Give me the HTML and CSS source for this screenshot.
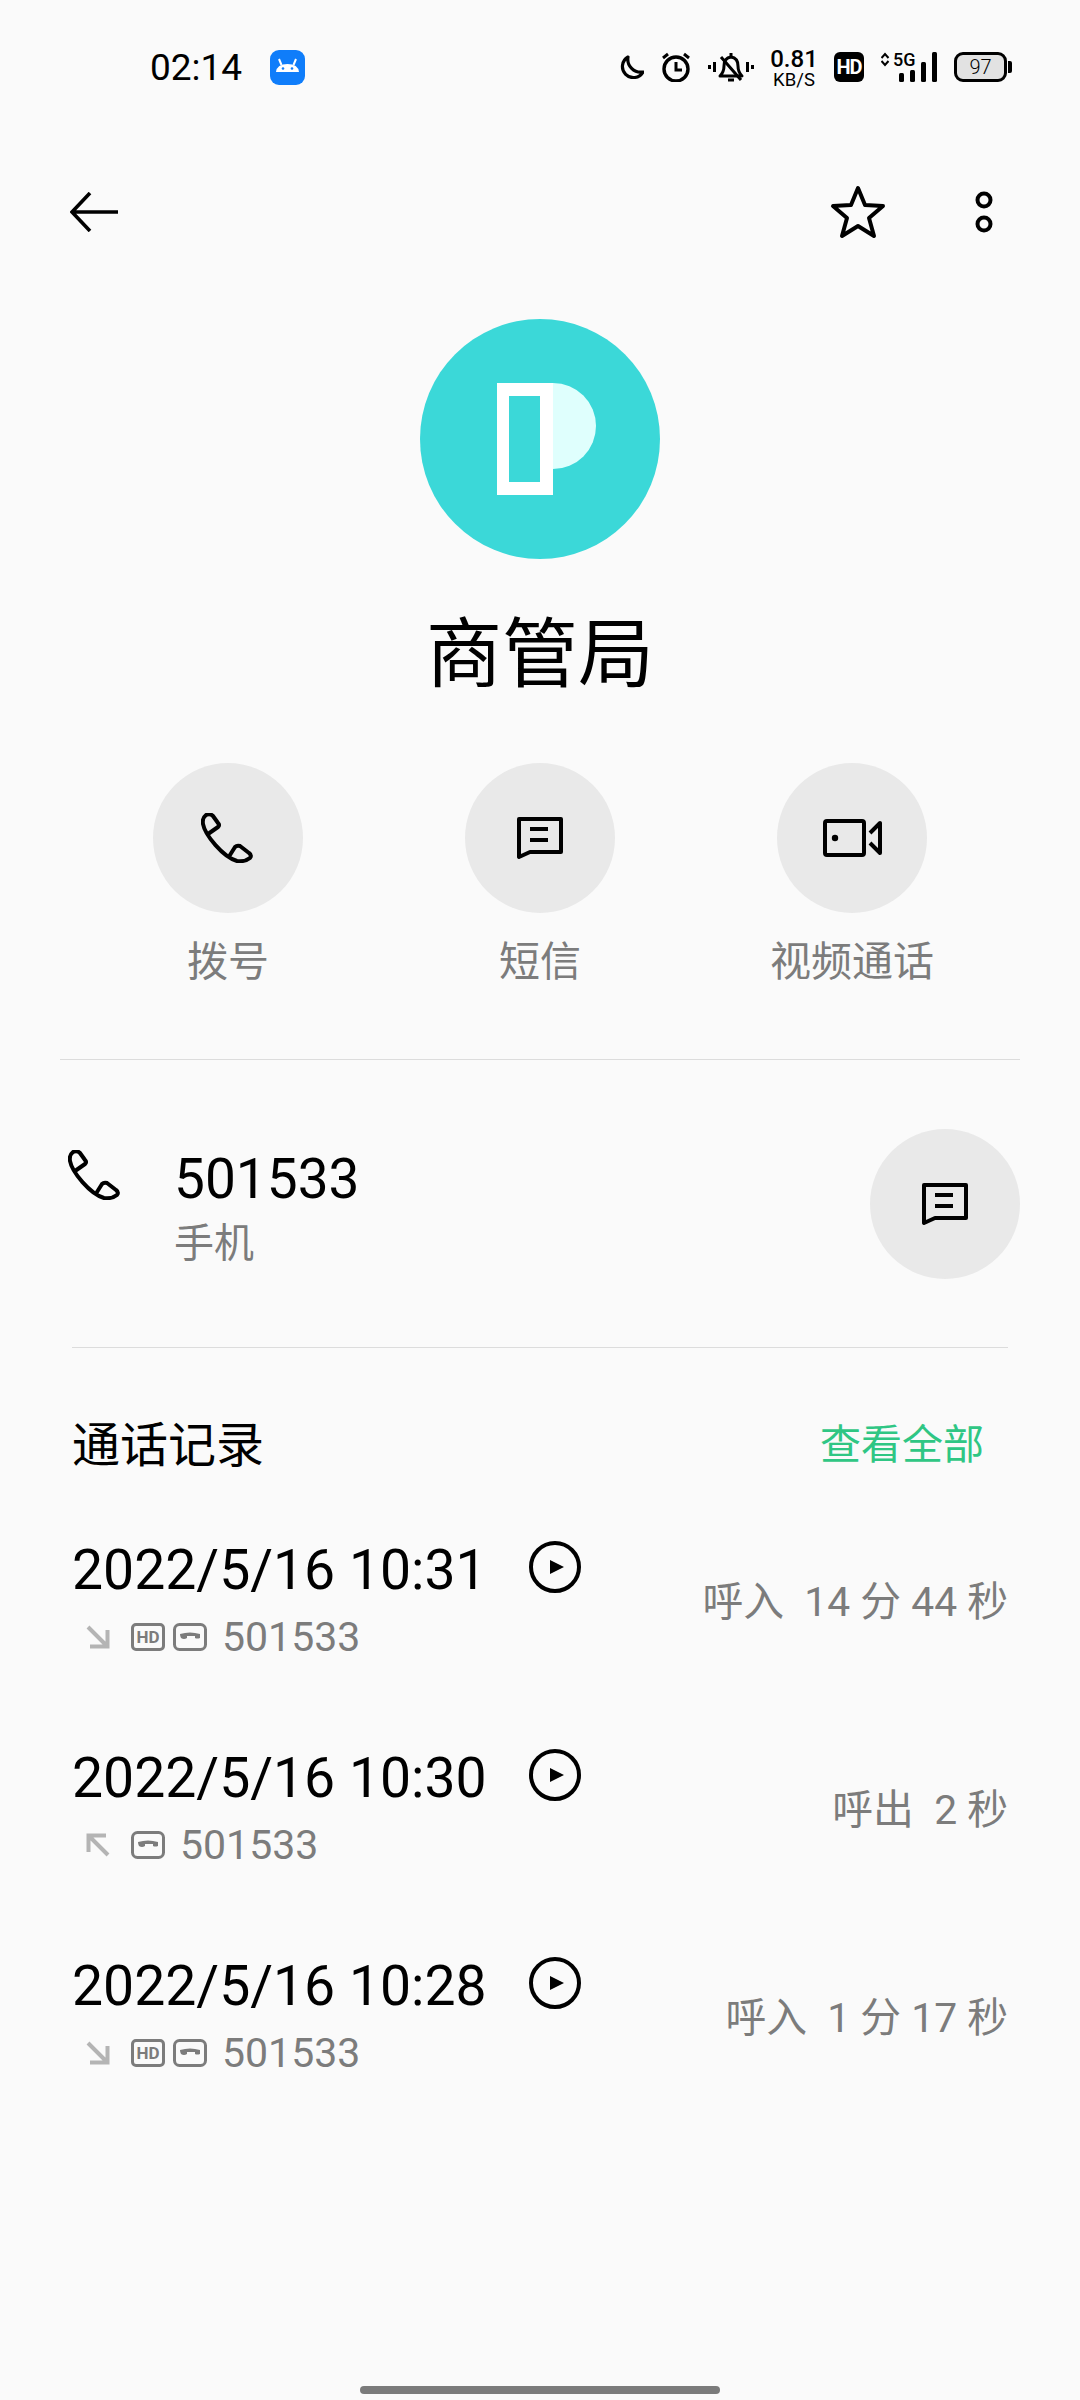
FILE: index.html
```html
<!DOCTYPE html>
<html lang="zh-CN">
<head>
  <meta charset="UTF-8">
  <meta name="viewport" content="width=device-width, initial-scale=1.0">
  <title>商管局</title>
  <link rel="stylesheet" href="styles.css">
</head>
<body>
  <svg class="defs" width="0" height="0">
    <symbol id="i-phone" viewBox="0 0 54 50">
      <path d="M7 21 L17 14 Q19 12 17 10 L12 3 Q9 0 5 2 Q1 5 2 11 C4 22 22 44 36 48 Q44 49 49 45 Q51 42 48 40 L39 33 Q36 32 34 34 L29 42" fill="none" stroke="#000" stroke-width="4" stroke-linejoin="round" stroke-linecap="round"/>
    </symbol>
    <symbol id="i-msg" viewBox="0 0 46 43">
      <path d="M2 2 H44 V35 H13 L2 40 Z" fill="none" stroke="#000" stroke-width="4" stroke-linejoin="round"/>
      <path d="M13 12 H31 M13 23 H31" stroke="#000" stroke-width="4"/>
    </symbol>
    <symbol id="i-play" viewBox="0 0 52 52">
      <circle cx="26" cy="26" r="24" fill="none" stroke="#000" stroke-width="4"/>
      <path d="M21 19 L35 26 L21 33 Z" fill="#000"/>
    </symbol>
    <symbol id="i-in" viewBox="0 0 24 24">
      <path d="M2 2 L21 21 M4 21.500 H21.500 V5" fill="none" stroke="#b4b4b4" stroke-width="4"/>
    </symbol>
    <symbol id="i-out" viewBox="0 0 24 24">
      <path d="M22 22 L3 3 M20 2.500 H2.500 V19" fill="none" stroke="#b4b4b4" stroke-width="4"/>
    </symbol>
    <symbol id="i-call" viewBox="0 0 34 28">
      <rect x="1.500" y="1.500" width="31" height="25" rx="5" fill="none" stroke="#7c7c7c" stroke-width="3"/>
      <path d="M7 11 Q17 8 27 11 V15 Q24 16 22 15 V13 H14 V15 Q11 17 8 15 Q7 13 7 11 Z" fill="#7c7c7c"/>
    </symbol>
  </svg>

  <div class="status">
    <div class="status-left">
      <span class="clock">02:14</span>
      <svg class="app-icon" width="35" height="35" viewBox="0 0 35 35">
        <rect width="35" height="35" rx="9" fill="#0f7dfa"/>
        <path d="M6 22 Q7 14 17.500 14 Q28 14 29 22 Z" fill="#fff"/>
        <path d="M11.500 15 L9 9 M23.500 15 L26 9" stroke="#fff" stroke-width="2"/>
        <circle cx="13" cy="18.500" r="1.300" fill="#0f7dfa"/>
        <circle cx="22" cy="18.500" r="1.300" fill="#0f7dfa"/>
      </svg>
    </div>
    <div class="status-right">
      <svg width="26" height="24" viewBox="0 0 26 24">
        <path d="M10 2 A11 11 0 1 0 25 17 A13 13 0 0 1 10 2 Z" fill="none" stroke="#000" stroke-width="3.200" stroke-linejoin="round"/>
      </svg>
      <svg width="30" height="30" viewBox="0 0 30 30">
        <circle cx="15" cy="17" r="12" fill="none" stroke="#000" stroke-width="3.400"/>
        <path d="M15 10 V18 H21" fill="none" stroke="#000" stroke-width="3"/>
        <path d="M2 6 L7 2 M28 6 L23 2" stroke="#000" stroke-width="3"/>
      </svg>
      <svg width="46" height="30" viewBox="0 0 46 30">
        <path d="M12 24 Q16 20 16 14 Q16 6 23 5 Q30 6 30 14 Q30 20 34 24 Z" fill="none" stroke="#000" stroke-width="3" stroke-linejoin="round"/>
        <path d="M13 5 L33 28 M23 1 V5 M20 28 H26" stroke="#000" stroke-width="3"/>
        <path d="M1.500 13 V17 M6.500 10 V20 M39.500 10 V20 M44.500 13 V17" stroke="#000" stroke-width="3"/>
      </svg>
      <div class="speed"><b>0.81</b><span>KB/S</span></div>
      <div class="hd-badge">HD</div>
      <div class="signal">
        <svg width="56" height="30" viewBox="0 0 56 30">
          <path d="M0.500 6 L4 2 L7.500 6 M0.500 9 L4 13 L7.500 9" fill="none" stroke="#000" stroke-width="2"/>
          <rect x="18" y="21" width="5" height="9" rx="1.500"/>
          <rect x="29" y="18" width="5" height="12" rx="1.500"/>
          <rect x="40" y="10" width="5" height="20" rx="1.500"/>
          <rect x="51" y="0" width="5" height="30" rx="1.500"/>
        </svg>
        <span class="signal-text">5G</span>
      </div>
      <div class="battery"><span class="battery-body">97</span><span class="battery-tip"></span></div>
    </div>
  </div>

  <div class="toolbar">
    <svg width="48" height="40" viewBox="0 0 48 40">
      <path d="M48 20 H3 M20 1 L2 20 L20 39" fill="none" stroke="#000" stroke-width="3.600"/>
    </svg>
    <div class="toolbar-right">
      <svg width="56" height="54" viewBox="0 0 56 54">
        <path d="M28 3 L35 20 L53 21 L39 33 L44 51 L28 41 L12 51 L17 33 L3 21 L21 20 Z" fill="none" stroke="#000" stroke-width="4" stroke-linejoin="round"/>
      </svg>
      <svg width="20" height="44" viewBox="0 0 20 44">
        <circle cx="10" cy="10" r="6.500" fill="none" stroke="#000" stroke-width="4"/>
        <circle cx="10" cy="34" r="6.500" fill="none" stroke="#000" stroke-width="4"/>
      </svg>
    </div>
  </div>

  <svg class="avatar" width="240" height="240" viewBox="0 0 240 240">
    <circle cx="120" cy="120" r="120" fill="#3bd8d8"/>
    <path d="M133 64 A43 43 0 0 1 133 150 Z" fill="#dffffd"/>
    <path d="M77 64 H133 V176 H77 Z M89 77 V163 H120 V77 Z" fill="#fff" fill-rule="evenodd"/>
  </svg>
  <h1 class="name">商管局</h1>

  <div class="actions">
    <div class="action">
      <div class="circle"><svg class="ic-phone"><use href="#i-phone"/></svg></div>
      <span>拨号</span>
    </div>
    <div class="action">
      <div class="circle"><svg class="ic-msg"><use href="#i-msg"/></svg></div>
      <span>短信</span>
    </div>
    <div class="action">
      <div class="circle">
        <svg width="59" height="38" viewBox="0 0 59 38">
          <rect x="2" y="2" width="39" height="34" rx="2" fill="none" stroke="#000" stroke-width="4"/>
          <circle cx="12" cy="19" r="3.200" fill="#000"/>
          <path d="M47 14 L57 4 V34 L47 24" fill="none" stroke="#000" stroke-width="4" stroke-linejoin="round"/>
        </svg>
      </div>
      <span>视频通话</span>
    </div>
  </div>

  <div class="number-row">
    <svg class="ic-phone number-icon"><use href="#i-phone"/></svg>
    <div class="number-text">
      <div class="number">501533</div>
      <div class="number-type">手机</div>
    </div>
    <div class="circle"><svg class="ic-msg"><use href="#i-msg"/></svg></div>
  </div>

  <div class="log">
    <div class="log-head">
      <span class="log-title">通话记录</span>
      <span class="log-all">查看全部</span>
    </div>

    <div class="call">
      <div>
        <div class="call-top">
          <span class="call-date">2022/5/16 10:31</span>
          <svg class="ic-play"><use href="#i-play"/></svg>
        </div>
        <div class="call-sub">
          <svg class="ic-dir"><use href="#i-in"/></svg>
          <span class="badge-hd">HD</span>
          <svg class="ic-call"><use href="#i-call"/></svg>
          <span class="call-num">501533</span>
        </div>
      </div>
      <span class="call-info">呼入&nbsp; 14 分 44 秒</span>
    </div>

    <div class="call">
      <div>
        <div class="call-top">
          <span class="call-date">2022/5/16 10:30</span>
          <svg class="ic-play"><use href="#i-play"/></svg>
        </div>
        <div class="call-sub">
          <svg class="ic-dir"><use href="#i-out"/></svg>
          <svg class="ic-call"><use href="#i-call"/></svg>
          <span class="call-num">501533</span>
        </div>
      </div>
      <span class="call-info">呼出&nbsp; 2 秒</span>
    </div>

    <div class="call">
      <div>
        <div class="call-top">
          <span class="call-date">2022/5/16 10:28</span>
          <svg class="ic-play"><use href="#i-play"/></svg>
        </div>
        <div class="call-sub">
          <svg class="ic-dir"><use href="#i-in"/></svg>
          <span class="badge-hd">HD</span>
          <svg class="ic-call"><use href="#i-call"/></svg>
          <span class="call-num">501533</span>
        </div>
      </div>
      <span class="call-info">呼入&nbsp; 1 分 17 秒</span>
    </div>
  </div>

  <div class="home-bar"></div>
</body>
</html>
```

FILE: styles.css
```css
* {
  box-sizing: border-box;
}
html, body {
  margin: 0;
  padding: 0;
}
body {
  width: 1080px;
  height: 2400px;
  overflow: hidden;
  background-color: #fafafa;
  color: #000;
  font-family: Roboto, "Noto Sans CJK SC", sans-serif;
  position: relative;
}
svg {
  display: block;
  flex-shrink: 0;
}
.defs {
  position: absolute;
}

.status {
  height: 134px;
  padding: 0 68px 0 150px;
  display: flex;
  justify-content: space-between;
  align-items: center;
}
.status-left {
  display: flex;
  align-items: center;
  gap: 28px;
}
.clock {
  font-size: 37px;
}
.status-right {
  display: flex;
  align-items: center;
  gap: 17px;
}
.speed {
  display: flex;
  flex-direction: column;
  align-items: center;
  width: 46px;
  padding-top: 3px;
}
.speed b {
  font-size: 24px;
  font-weight: 500;
  line-height: 22px;
}
.speed span {
  margin-top: 1px;
  font-size: 18.500px;
  line-height: 18px;
}
.hd-badge {
  width: 30px;
  height: 30px;
  border-radius: 6px;
  background: #000;
  color: #fff;
  font-size: 20px;
  font-weight: 700;
  line-height: 30px;
  text-align: center;
  letter-spacing: -1px;
}
.signal {
  position: relative;
}
.signal-text {
  position: absolute;
  left: 12px;
  top: -3px;
  font-size: 18px;
  font-weight: 500;
  line-height: 22px;
}
.battery {
  display: flex;
  align-items: center;
  gap: 1px;
}
.battery-body {
  width: 53px;
  height: 30px;
  border: 3px solid #000;
  border-radius: 9px;
  background: #e2e2e2;
  font-size: 20px;
  line-height: 24px;
  font-weight: 300;
  text-align: center;
}
.battery-tip {
  width: 4px;
  height: 12px;
  background: #000;
  border-radius: 0 2px 2px 0;
}

.toolbar {
  height: 100px;
  margin-top: 28px;
  padding: 0 86px 0 70px;
  display: flex;
  justify-content: space-between;
  align-items: center;
}
.toolbar-right {
  display: flex;
  align-items: center;
  gap: 88px;
}

.avatar {
  margin: 57px auto 0;
}
.name {
  margin: 46px 0 0;
  font-size: 76px;
  font-weight: 400;
  line-height: 100px;
  text-align: center;
}

.actions {
  margin-top: 58px;
  padding: 0 153px;
  display: flex;
  justify-content: space-between;
}
.action {
  width: 150px;
  display: flex;
  flex-direction: column;
  align-items: center;
  font-size: 41px;
  color: #7c7c7c;
  white-space: nowrap;
}
.action span {
  margin-top: 19px;
  line-height: 60px;
}
.circle {
  width: 150px;
  height: 150px;
  border-radius: 50%;
  background: #e9e9e9;
  display: flex;
  justify-content: center;
  align-items: center;
}
.ic-phone {
  width: 54px;
  height: 50px;
}
.ic-msg {
  width: 46px;
  height: 43px;
}

.number-row {
  margin: 67px 60px 0;
  padding: 69px 0 69px 8px;
  border-top: 1px solid #dcdcdc;
  display: flex;
  align-items: flex-start;
  position: relative;
}
.number-row::after {
  content: "";
  position: absolute;
  left: 12px;
  right: 12px;
  bottom: 0;
  border-top: 1px solid #dcdcdc;
}
.number-icon {
  margin-top: 21px;
}
.number-text {
  margin-left: 52px;
  flex: 1;
}
.number {
  margin-top: 13px;
  font-size: 55px;
  line-height: 74px;
}
.number-type {
  font-size: 40px;
  line-height: 55px;
  color: #7c7c7c;
}

.log {
  padding: 0 72px;
}
.log-head {
  height: 72px;
  margin-top: 57px;
  margin-bottom: 15px;
  padding-right: 24px;
  display: flex;
  justify-content: space-between;
  align-items: center;
}
.log-title {
  font-size: 48px;
}
.log-all {
  font-size: 41px;
  color: #2fc684;
}
.call {
  height: 208px;
  display: flex;
  justify-content: space-between;
  align-items: center;
}
.call-top {
  display: flex;
  align-items: center;
  height: 72px;
  margin-top: 6px;
}
.call-date {
  width: 457px;
  font-size: 55.300px;
  white-space: nowrap;
}
.ic-play {
  width: 52px;
  height: 52px;
  margin-top: -6px;
}
.call-sub {
  display: flex;
  align-items: center;
  height: 54px;
  margin-top: 4px;
  padding-left: 14px;
}
.ic-dir {
  width: 24px;
  height: 24px;
  margin-right: 21px;
}
.badge-hd {
  width: 34px;
  height: 28px;
  margin-right: 8px;
  border: 3px solid #7c7c7c;
  border-radius: 5px;
  color: #7c7c7c;
  font-size: 17px;
  font-weight: 700;
  line-height: 22px;
  text-align: center;
}
.ic-call {
  width: 34px;
  height: 28px;
}
.call-num {
  margin-left: 15px;
  font-size: 41px;
  color: #7c7c7c;
}
.call-info {
  padding-top: 4px;
  font-size: 40.800px;
  color: #7c7c7c;
}

.home-bar {
  position: absolute;
  left: 360px;
  bottom: 6px;
  width: 360px;
  height: 8px;
  border-radius: 4px;
  background: #7b7b7b;
}
```
